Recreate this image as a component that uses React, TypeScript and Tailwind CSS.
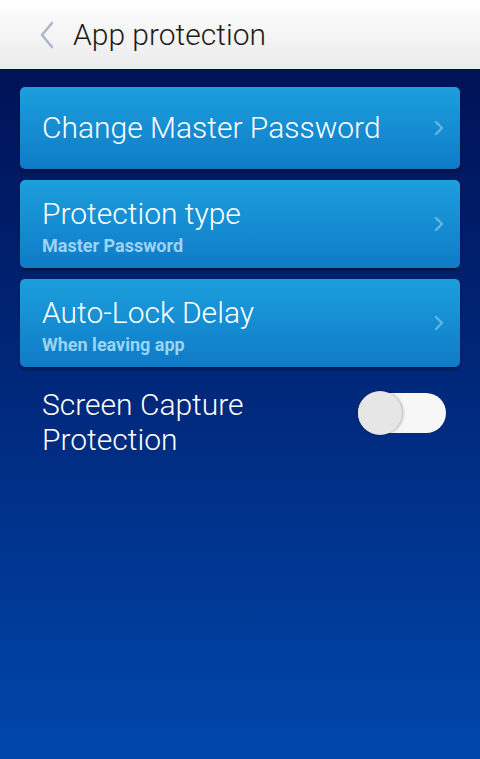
import React from 'react';

type Item = {
  title: string;
  subtitle?: string;
};

const items: Item[] = [
  { title: 'Change Master Password' },
  { title: 'Protection type', subtitle: 'Master Password' },
  { title: 'Auto-Lock Delay', subtitle: 'When leaving app' },
];

const Chevron: React.FC<{ className?: string }> = ({ className = '' }) => (
  <svg width="12" height="16" viewBox="0 0 12 16" className={`shrink-0 ${className}`}>
    <path d="M3 2 L9 8 L3 14" fill="none" stroke="#62b6e8" strokeWidth="2.4" strokeLinecap="round" strokeLinejoin="round" />
  </svg>
);

const SettingCard: React.FC<{ item: Item }> = ({ item }) => (
  <div
    className={`flex items-center justify-between rounded-[5px] bg-gradient-to-b from-[#1d9fdd] to-[#0f7bc7] pl-[22px] pr-[15px] shadow-[0_2px_3px_rgba(0,0,0,0.45)] ${
      item.subtitle ? 'h-[88px] pt-[5px]' : 'h-[82px]'
    }`}
  >
    <div className="flex flex-col">
      <span className="text-[30px] font-light leading-[34px] text-white">{item.title}</span>
      {item.subtitle && (
        <span className="mt-[4px] text-[18px] font-bold leading-[21px] text-[#9dd3f3]">{item.subtitle}</span>
      )}
    </div>
    <Chevron className={item.subtitle ? '-mt-[5px]' : ''} />
  </div>
);

const App: React.FC = () => {
  return (
    <div className="flex h-[759px] w-[480px] flex-col overflow-hidden font-['Roboto',sans-serif]">
      <header className="flex h-[69px] shrink-0 items-center bg-gradient-to-b from-[#fefefe] to-[#ebebeb]">
        <svg width="16" height="28" viewBox="0 0 16 28" className="ml-[39px]">
          <path d="M13 2 L3 14 L13 26" fill="none" stroke="#a9b5cd" strokeWidth="2.4" strokeLinecap="round" strokeLinejoin="round" />
        </svg>
        <h1 className="ml-[18px] text-[30px] font-light text-[#1c1c1c]">App protection</h1>
      </header>

      <main className="flex flex-1 flex-col bg-gradient-to-b from-[#001257] via-[#002a7e] to-[#0047ab] px-5 pt-[18px]">
        <div className="flex flex-col gap-[11px]">
          {items.map((item) => (
            <SettingCard key={item.title} item={item} />
          ))}
        </div>

        <div className="mt-[20px] flex items-start justify-between pl-[22px] pr-[14px]">
          <span className="text-[30px] font-light leading-[35px] text-white">
            Screen Capture
            <br />
            Protection
          </span>
          <div className="relative mt-[6px] h-[40px] w-[88px] rounded-full bg-[#f7f7f7]">
            <div className="absolute left-0 top-[-2px] h-[44px] w-[44px] rounded-full bg-[#e6e6e6] shadow-[1px_0_3px_rgba(0,0,0,0.3)]" />
          </div>
        </div>
      </main>
    </div>
  );
};

export default App;
